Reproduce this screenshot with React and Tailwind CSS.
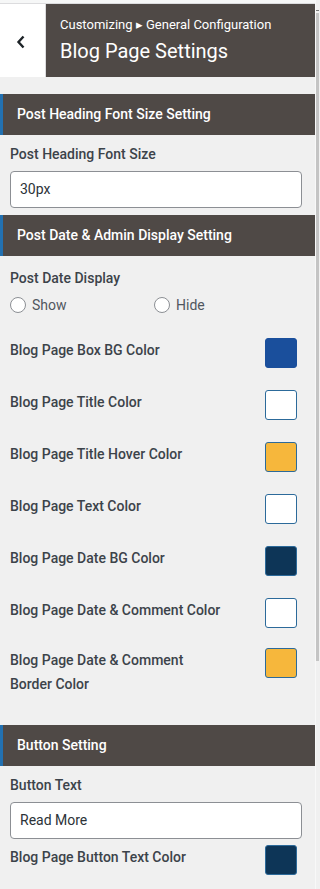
import React from "react";

const FONT = { fontFamily: "Roboto, 'Liberation Sans', sans-serif" };

function SectionHeader({ title }) {
  return (
    <div className="h-[41px] flex items-center bg-[#4f4946] border-l-[3px] border-[#2271b1] pl-[14px]">
      <span className="text-[14px] font-medium text-white">{title}</span>
    </div>
  );
}

function Label({ children, className = "" }) {
  return <div className={`text-[14px] leading-[20px] font-medium text-[#3c434a] ${className}`}>{children}</div>;
}

function TextInput({ value, className = "" }) {
  return (
    <div className={`h-[37px] mr-[3px] flex items-center bg-white border border-[#8c8f94] rounded-[4px] pl-[9px] text-[14px] text-[#2c3338] ${className}`}>
      {value}
    </div>
  );
}

function ColorRow({ label, color, border, className = "" }) {
  return (
    <div className={`flex justify-between items-start ${className}`}>
      <div className="text-[14px] leading-[24px] font-medium text-[#3c434a]">{label}</div>
      <div className={`w-[32px] h-[30px] mr-[8px] rounded-[3px] border ${border}`} style={{ backgroundColor: color }} />
    </div>
  );
}

function Radio({ label, className = "" }) {
  return (
    <div className={`flex items-center gap-[6px] ${className}`}>
      <span className="w-[16px] h-[16px] rounded-full border border-[#8c8f94] bg-white" />
      <span className="text-[14px] text-[#50575e]">{label}</span>
    </div>
  );
}

export default function App() {
  return (
    <div className="w-[320px] h-[889px] overflow-hidden bg-[#f0f0f0] flex items-start" style={FONT}>
      <div className="w-[315px] shrink-0 flex flex-col">
        <div className="h-[4px] bg-[#f6f7f7] border-b border-[#dcdcde]" />
        <div className="h-[73px] flex">
          <div className="w-[46px] bg-white border-r border-[#dcdcde] flex items-center justify-center">
            <svg width="10" height="14" viewBox="0 0 10 14" className="mr-[3px] mt-[2px]">
              <path d="M7.5 1.5 L2.5 7 L7.5 12.5" fill="none" stroke="#1d2327" strokeWidth="2.4" />
            </svg>
          </div>
          <div className="flex-1 bg-[#4f4946] pl-[14px] pt-[12px] text-white">
            <div className="text-[13px] leading-[18px]">Customizing ▸ General Configuration</div>
            <div className="text-[20px] leading-[26px] mt-[4px]">Blog Page Settings</div>
          </div>
        </div>

        <div className="mt-[17px]">
          <SectionHeader title="Post Heading Font Size Setting" />
          <div className="pl-[10px] pr-[10px]">
            <Label className="mt-[9px]">Post Heading Font Size</Label>
            <TextInput value="30px" className="mt-[7px]" />
          </div>
        </div>

        <div className="mt-[7px]">
          <SectionHeader title="Post Date & Admin Display Setting" />
          <div className="pl-[10px] pr-[10px]">
            <Label className="mt-[12px]">Post Date Display</Label>
            <div className="flex mt-[7px] h-[20px]">
              <Radio label="Show" className="w-[144px]" />
              <Radio label="Hide" />
            </div>
            <ColorRow className="mt-[23px]" label="Blog Page Box BG Color" color="#1a4f9c" border="border-[#1a4f9c]" />
            <ColorRow className="mt-[22px]" label="Blog Page Title Color" color="#ffffff" border="border-[#2c6a9a]" />
            <ColorRow className="mt-[22px]" label="Blog Page Title Hover Color" color="#f6b73c" border="border-[#2c6a9a]" />
            <ColorRow className="mt-[22px]" label="Blog Page Text Color" color="#ffffff" border="border-[#2c6a9a]" />
            <ColorRow className="mt-[22px]" label="Blog Page Date BG Color" color="#0d3557" border="border-[#2c6a9a]" />
            <ColorRow className="mt-[22px]" label="Blog Page Date & Comment Color" color="#ffffff" border="border-[#2c6a9a]" />
            <ColorRow
              className="mt-[20px]"
              label={<>Blog Page Date & Comment<br />Border Color</>}
              color="#f6b73c"
              border="border-[#2c6a9a]"
            />
          </div>
        </div>

        <div className="mt-[29px]">
          <SectionHeader title="Button Setting" />
          <div className="pl-[10px] pr-[10px]">
            <Label className="mt-[9px]">Button Text</Label>
            <TextInput value="Read More" className="mt-[7px]" />
            <ColorRow className="mt-[6px]" label="Blog Page Button Text Color" color="#0d3557" border="border-[#2c6a9a]" />
          </div>
        </div>
      </div>
      <div className="w-[5px] h-[889px] bg-[#f0f0f0] border-l border-[#f8f8f8] flex flex-col">
        <div className="h-[1px] w-[3px] bg-[#777] mt-[10px]" />
        <div className="w-[3px] bg-[#c4c4c4] mt-[2px] h-[648px]" />
      </div>
    </div>
  );
}
